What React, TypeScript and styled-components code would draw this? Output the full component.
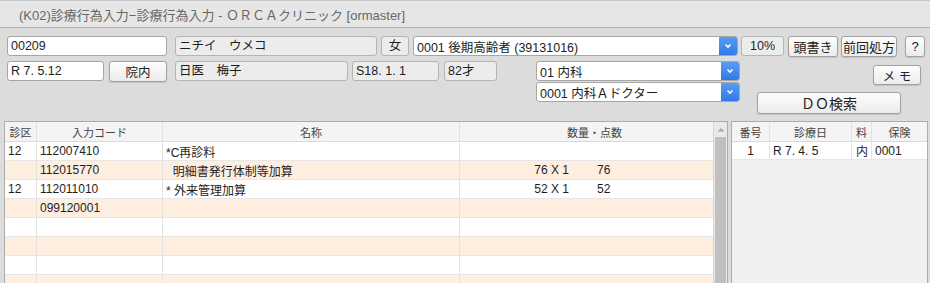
import React from 'react';
import styled, { createGlobalStyle } from 'styled-components';

const GlobalStyle = createGlobalStyle`
  html, body { margin: 0; padding: 0; background: #dcdcdc; }
  body {
    font-family: "Liberation Sans", "Noto Sans CJK JP", sans-serif;
    font-size: 12px;
    color: #1e1e1e;
    width: 930px;
    height: 283px;
    overflow: hidden;
  }
  * { box-sizing: border-box; }
`;

const Page = styled.div`
  width: 930px;
  height: 283px;
  display: flex;
  flex-direction: column;
`;

const TitleBar = styled.div`
  height: 28px;
  border-top: 1px solid #c8c8c8;
  border-bottom: 1px solid #b4b4b4;
  background: #e6e6e6;
  display: flex;
  align-items: center;
  padding-left: 19px;
  color: #666666;
  font-size: 13px;
`;

const Header = styled.div`
  padding: 8px 0 0 7px;
  display: flex;
  flex-direction: column;
`;

const Row1 = styled.div`
  display: flex;
  align-items: flex-start;
  height: 21px;
`;

const Row2 = styled.div`
  display: flex;
  align-items: flex-start;
  height: 53px;
  margin-top: 4px;
`;

const Field = styled.div<{ $w: number; $ro?: boolean; $ml?: number; $center?: boolean }>`
  width: ${p => p.$w}px;
  height: 20px;
  margin-left: ${p => p.$ml ?? 0}px;
  border: 1px solid ${p => (p.$ro ? '#b4b4b4' : '#a6a6a6')};
  border-radius: 3px;
  background: ${p => (p.$ro ? '#ececec' : '#ffffff')};
  display: flex;
  align-items: center;
  justify-content: ${p => (p.$center ? 'center' : 'flex-start')};
  padding: 0 3px;
  white-space: pre;
  flex-shrink: 0;
  line-height: 1;
  font-size: 12.5px;
`;

const Button = styled.div<{ $w: number; $h?: number; $ml?: number; $mt?: number; $fs?: number }>`
  width: ${p => p.$w}px;
  height: ${p => p.$h ?? 21}px;
  margin-left: ${p => p.$ml ?? 0}px;
  margin-top: ${p => p.$mt ?? 0}px;
  border: 1px solid #a0a0a0;
  border-radius: 3px;
  background: linear-gradient(#fdfdfd, #ececec);
  box-shadow: 0 1px 1px rgba(0, 0, 0, 0.12);
  display: flex;
  align-items: center;
  justify-content: center;
  flex-shrink: 0;
  white-space: pre;
  color: #222;
  font-size: ${p => p.$fs ?? 13}px;
`;

const ComboBox = styled.div<{ $w: number; $ml?: number; $mt?: number }>`
  width: ${p => p.$w}px;
  height: 20px;
  margin-left: ${p => p.$ml ?? 0}px;
  margin-top: ${p => p.$mt ?? 0}px;
  display: flex;
  flex-shrink: 0;
  border: 1px solid #a6a6a6;
  border-radius: 3px;
  background: #fff;
  overflow: hidden;
  font-size: 12.5px;
`;

const ComboText = styled.div`
  flex: 1;
  display: flex;
  align-items: center;
  padding-left: 3px;
  white-space: pre;
`;

const ComboArrow = styled.div`
  width: 18px;
  background: linear-gradient(#5a9cf5, #2f7ae8);
  display: flex;
  align-items: center;
  justify-content: center;
`;

const ComboStack = styled.div`
  display: flex;
  flex-direction: column;
  margin-left: 39px;
`;

const RightCol = styled.div`
  width: 164px;
  margin-left: 17px;
  display: flex;
  flex-direction: column;
`;

const MemoWrap = styled.div`
  display: flex;
  justify-content: flex-end;
  margin-top: 4px;
`;

const Main = styled.div`
  display: flex;
  margin-top: 7px;
  padding-left: 4px;
  gap: 3px;
  flex: 1;
  min-height: 0;
`;

const TableBox = styled.div`
  width: 724px;
  border: 1px solid #acacac;
  border-bottom: none;
  display: flex;
  background: #fff;
`;

const TableBody = styled.div`
  flex: 1;
  display: flex;
  flex-direction: column;
`;

const Grid = styled.div<{ $cols: string; $head?: boolean; $alt?: boolean; $h?: number }>`
  display: grid;
  grid-template-columns: ${p => p.$cols};
  height: ${p => p.$h ?? 19}px;
  flex-shrink: 0;
  background: ${p => (p.$head ? '#f4f4f4' : p.$alt ? '#feeee0' : '#ffffff')};
  border-bottom: 1px solid ${p => (p.$head ? '#dadada' : '#e6e6e6')};
  color: ${p => (p.$head ? '#444444' : '#1e1e1e')};
  font-size: ${p => (p.$head ? 11 : 12)}px;
`;

const Cell = styled.div<{ $align?: 'left' | 'center' | 'right'; $pl?: number }>`
  display: flex;
  align-items: center;
  justify-content: ${p => (p.$align === 'center' ? 'center' : p.$align === 'right' ? 'flex-end' : 'flex-start')};
  padding-left: ${p => p.$pl ?? 3}px;
  border-right: 1px solid #e2e2e2;
  white-space: pre;
  overflow: hidden;
  &:last-child { border-right: none; }
`;

const Qty = styled.span`
  width: 109px;
  text-align: right;
`;

const Points = styled.span`
  margin-left: 28px;
`;

const ScrollBar = styled.div`
  width: 14px;
  background: #e9e9e9;
  border-left: 1px solid #d6d6d6;
  display: flex;
  flex-direction: column;
  align-items: center;
`;

const ScrollUp = styled.div`
  height: 15px;
  display: flex;
  align-items: center;
  justify-content: center;
`;

const Thumb = styled.div`
  width: 11px;
  flex: 1;
  background: #c0c0c0;
`;

const SidePanel = styled.div`
  width: 197px;
  border: 1px solid #acacac;
  border-bottom: none;
  background: #f0f0f0;
  display: flex;
  flex-direction: column;
`;

const Chevron = () => (
  <svg width="8" height="6" viewBox="0 0 8 6">
    <polyline points="1.5,1.5 4,4 6.5,1.5" fill="none" stroke="#fff" strokeWidth="1.6" />
  </svg>
);

const UpArrow = () => (
  <svg width="8" height="5" viewBox="0 0 8 5">
    <polygon points="0.5,4.5 4,1 7.5,4.5" fill="#a8a8a8" />
  </svg>
);

const Combo: React.FC<{ w: number; ml?: number; mt?: number; children: React.ReactNode }> = ({ w, ml, mt, children }) => (
  <ComboBox $w={w} $ml={ml} $mt={mt}>
    <ComboText>{children}</ComboText>
    <ComboArrow>
      <Chevron />
    </ComboArrow>
  </ComboBox>
);

const mainCols = '32px 126px 297px 1fr';
const sideCols = '38px 82px 20px 1fr';

type Item = { ku: string; code: string; name: string; qty: string; pts: string };

const items: Item[] = [
  { ku: '12', code: '112007410', name: '*C再診料', qty: '', pts: '' },
  { ku: '', code: '112015770', name: '  明細書発行体制等加算', qty: '76 X 1', pts: '76' },
  { ku: '12', code: '112011010', name: '* 外来管理加算', qty: '52 X 1', pts: '52' },
  { ku: '', code: '099120001', name: '', qty: '', pts: '' },
  { ku: '', code: '', name: '', qty: '', pts: '' },
  { ku: '', code: '', name: '', qty: '', pts: '' },
  { ku: '', code: '', name: '', qty: '', pts: '' },
  { ku: '', code: '', name: '', qty: '', pts: '' },
];

export default function App() {
  return (
    <>
      <GlobalStyle />
      <Page>
        <TitleBar>(K02)診療行為入力−診療行為入力 - ＯＲＣＡクリニック [ormaster]</TitleBar>
        <Header>
          <Row1>
            <Field $w={160}>00209</Field>
            <Field $w={202} $ro $ml={8}>ニチイ　ウメコ</Field>
            <Field $w={28} $ro $ml={4} $center>女</Field>
            <Combo w={325} ml={4}>0001 後期高齢者 (39131016)</Combo>
            <Field $w={43} $ro $ml={3} $center>10%</Field>
            <Button $w={50} $ml={4}>頭書き</Button>
            <Button $w={56} $ml={3}>前回処方</Button>
            <Button $w={20} $ml={8}>?</Button>
          </Row1>
          <Row2>
            <Field $w={97}>R 7. 5.12</Field>
            <Button $w={58} $ml={5} $fs={12.5}>院内</Button>
            <Field $w={173} $ro $ml={8}>日医　梅子</Field>
            <Field $w={87} $ro $ml={4}>S18. 1. 1</Field>
            <Field $w={53} $ro $ml={5}>82才</Field>
            <ComboStack>
              <Combo w={204}>01 内科</Combo>
              <Combo w={204} mt={1}>0001 内科Ａドクター</Combo>
            </ComboStack>
            <RightCol>
              <MemoWrap>
                <Button $w={48} $h={20} $fs={12.5}>メ モ</Button>
              </MemoWrap>
              <Button $w={144} $h={22} $mt={7} $fs={14}>ＤＯ検索</Button>
            </RightCol>
          </Row2>
        </Header>
        <Main>
          <TableBox>
            <TableBody>
              <Grid $cols={mainCols} $head $h={20}>
                <Cell $align="center" $pl={0}>診区</Cell>
                <Cell $align="center" $pl={0}>入力コード</Cell>
                <Cell $align="center" $pl={0}>名称</Cell>
                <Cell $align="center" $pl={16}>数量・点数</Cell>
              </Grid>
              {items.map((it, i) => (
                <Grid key={i} $cols={mainCols} $alt={i % 2 === 1}>
                  <Cell>{it.ku}</Cell>
                  <Cell>{it.code}</Cell>
                  <Cell>{it.name}</Cell>
                  <Cell $pl={0}>
                    <Qty>{it.qty}</Qty>
                    <Points>{it.pts}</Points>
                  </Cell>
                </Grid>
              ))}
            </TableBody>
            <ScrollBar>
              <ScrollUp>
                <UpArrow />
              </ScrollUp>
              <Thumb />
            </ScrollBar>
          </TableBox>
          <SidePanel>
            <Grid $cols={sideCols} $head $h={20}>
              <Cell $align="center" $pl={0}>番号</Cell>
              <Cell $align="center" $pl={0}>診療日</Cell>
              <Cell $align="center" $pl={0}>料</Cell>
              <Cell $align="center" $pl={0}>保険</Cell>
            </Grid>
            <Grid $cols={sideCols} $h={18}>
              <Cell $align="center" $pl={0}>1</Cell>
              <Cell>R 7. 4. 5</Cell>
              <Cell $pl={4}>内</Cell>
              <Cell>0001</Cell>
            </Grid>
          </SidePanel>
        </Main>
      </Page>
    </>
  );
}
